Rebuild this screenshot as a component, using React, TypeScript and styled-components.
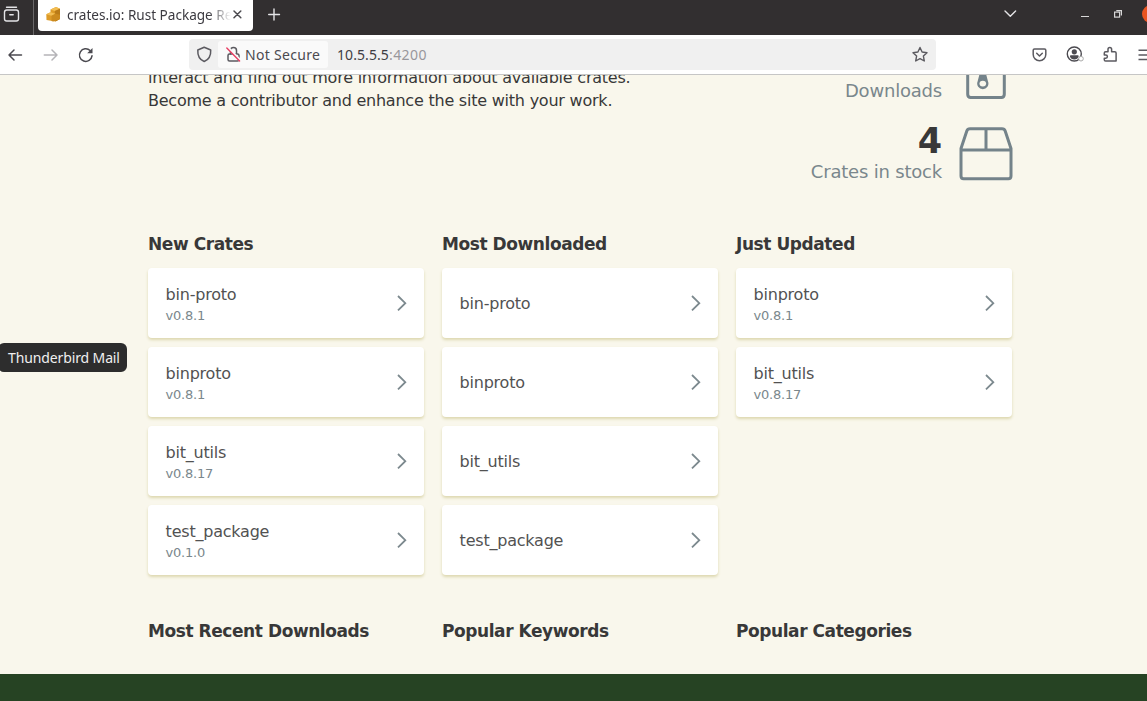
import React from "react";
import styled, { createGlobalStyle } from "styled-components";

const GlobalStyle = createGlobalStyle`
  *, *::before, *::after { box-sizing: border-box; }
  body { margin: 0; overflow: hidden; }
  h2, p { margin: 0; }
  svg { display: block; flex: none; }
`;

const Window = styled.div`
  position: relative;
  display: flex;
  flex-direction: column;
  width: 1147px;
  height: 701px;
  overflow: hidden;
  background: #f9f7ec;
  font-family: "DejaVu Sans", sans-serif;
  color: #383838;
`;

const TabBar = styled.div`
  display: flex;
  flex: none;
  height: 35px;
  background: #322f30;
  color: #fbfbfe;
  font-family: "Noto Sans", "Open Sans", sans-serif;
`;

const FirefoxView = styled.div`
  width: 34px;
  height: 35px;
  padding: 6px 0 0 3px;
  border-right: 1px solid #6a6869;
`;

const Tab = styled.div`
  display: flex;
  align-items: center;
  width: 215px;
  height: 34px;
  margin: -3px 0 0 4px;
  padding: 0 10px 0 7px;
  border-radius: 4px;
  background: #fff;
  color: #3c3b41;
`;

const TabTitle = styled.span`
  width: 166px;
  margin-left: 5px;
  padding-top: 1px;
  overflow: hidden;
  white-space: nowrap;
  font-size: 13.6px;
  line-height: 20px;
  letter-spacing: -0.02px;
  mask-image: linear-gradient(to left, transparent 2px, #000 24px);
`;

const NewTab = styled.div`
  padding: 8px 0 0 15px;
`;

const WindowControls = styled.div`
  display: flex;
  align-items: center;
  height: 28px;
  margin-left: auto;
`;

const Minimize = styled.div`
  width: 8px;
  height: 1.5px;
  margin: 5px 25px 0 64px;
  background: #d8d8d8;
`;

const CloseButton = styled.div`
  width: 18px;
  height: 18px;
  margin: 0 -13px 0 20px;
  border-radius: 50%;
  background: #e95420;
`;

const NavBar = styled.div`
  display: flex;
  flex: none;
  align-items: center;
  height: 40px;
  padding-left: 7px;
  border-bottom: 1px solid #c6c6c6;
  background: #fff;
  color: #55545a;
  font-family: "Noto Sans", "Open Sans", sans-serif;
`;

const NavButtons = styled.div`
  display: flex;
  flex: none;
  align-items: center;
  gap: 19px;
  width: 182px;
`;

const AddressBar = styled.div`
  display: flex;
  flex: none;
  align-items: center;
  width: 747px;
  height: 31px;
  padding: 0 8px 0 7px;
  border-radius: 4px;
  background: #f0f0f0;
  font-size: 14px;
  white-space: nowrap;
`;

const Security = styled.div`
  display: flex;
  align-items: center;
  gap: 3px;
  width: 110px;
  height: 27px;
  margin-left: 6px;
  padding-left: 7px;
  border-radius: 3px;
  background: #fafafa;
  color: #4b4a50;
  letter-spacing: 0.3px;
`;

const Url = styled.span`
  margin: 0 auto 0 9px;
  font-size: 14px;
  letter-spacing: 0.08px;
  color: #3e3d43;
`;

const Port = styled.span`
  color: #98979c;
  letter-spacing: 0.45px;
`;

const Extensions = styled.div`
  display: flex;
  flex: none;
  align-items: center;
  gap: 18px;
  margin-left: 95px;
`;

const Page = styled.div`
  flex: 1;
  display: flex;
  flex-direction: column;
  min-height: 0;
  overflow: hidden;
`;

const Intro = styled.section`
  display: flex;
  justify-content: space-between;
  width: 865px;
  height: 120px;
  margin-left: 148px;
`;

const Blurb = styled.p`
  margin-top: -9px;
  font-size: 16px;
  line-height: 23px;
  letter-spacing: -0.225px;
  white-space: nowrap;
`;

const Stats = styled.div`
  display: flex;
  flex-direction: column;
`;

const Stat = styled.div<{ $height: number }>`
  display: flex;
  justify-content: flex-end;
  align-items: flex-end;
  height: ${(p) => p.$height}px;
  text-align: right;
`;

const StatText = styled.div<{ $drop: number }>`
  margin: 0 17px ${(p) => -p.$drop}px 0;
  color: #7a878c;
  font-size: 18px;
  line-height: 22px;
  letter-spacing: -0.2px;
`;

const StatValue = styled.div`
  margin-bottom: 2px;
  color: #383838;
  font-size: 35px;
  font-weight: 700;
  line-height: 36px;
`;

const ArchiveSlot = styled.div`
  width: 54px;
  margin-bottom: 2px;
  padding-left: 7px;
`;

const Lists = styled.section<{ $top: number }>`
  display: grid;
  grid-template-columns: repeat(3, 276px);
  align-items: start;
  gap: 18px;
  margin: ${(p) => p.$top}px 0 0 148px;
`;

const Column = styled.div`
  display: flex;
  flex-direction: column;
  gap: 9px;
`;

const Heading = styled.h2`
  margin-bottom: 5px;
  font-size: 17px;
  font-weight: 700;
  line-height: 20px;
  letter-spacing: -0.43px;
  white-space: nowrap;
`;

const Card = styled.div`
  display: flex;
  align-items: center;
  justify-content: space-between;
  height: 70px;
  padding: 0 15px 0 17.6px;
  border-radius: 4px;
  background: #fff;
  box-shadow: 0 2px 3px #ddd8b0;
  color: #525252;
  font-size: 16px;
  line-height: 20px;
  letter-spacing: -0.22px;
`;

const CrateLabel = styled.div<{ $offset: number }>`
  padding-top: ${(p) => p.$offset}px;
`;

const Version = styled.div`
  margin-top: 2px;
  color: #7a878c;
  font-size: 13px;
  line-height: 18px;
  letter-spacing: -0.22px;
`;

const Footer = styled.footer`
  flex: none;
  height: 27px;
  margin-top: auto;
  background: #264323;
`;

const Tooltip = styled.div`
  position: absolute;
  left: -2px;
  top: 343px;
  width: 129px;
  height: 29px;
  padding-left: 10px;
  border-radius: 6px;
  background: #2d2d2d;
  color: #f0f0f0;
  font-family: "Noto Sans", "Open Sans", sans-serif;
  font-size: 14px;
  line-height: 29px;
  letter-spacing: -0.12px;
  white-space: nowrap;
`;

const Chevron = () => (
  <svg width="14" height="18" viewBox="0 0 14 18" fill="none" stroke="#7c898e" strokeWidth="1.8">
    <path d="M3 2l7.300 7.200L3 16.400" />
  </svg>
);

const CrateIcon = () => (
  <svg width="54" height="54" viewBox="0 0 54 54" fill="none" stroke="#74838a" strokeWidth="3" strokeLinejoin="round">
    <path d="M2 21.500L7.800 4Q8.600 1.700 11 1.700H43Q45.400 1.700 46.200 4L52 21.500V49Q52 51.700 49.300 51.700H4.700Q2 51.700 2 49zM2 23H52M27 2V23" />
  </svg>
);

const ArchiveIcon = () => (
  <svg width="40" height="54" viewBox="0 0 40 54" fill="none" stroke="#74838a" strokeWidth="3">
    <path d="M1.700 2H38.300V49.300Q38.300 52.500 35.300 52.500H4.700Q1.700 52.500 1.700 49.300z" />
    <path d="M14.300 26h5l2.700 10.500a5.600 5.600 0 1 1-10.400 0z" fill="#74838a" stroke="none" />
    <ellipse cx="16.800" cy="38.600" rx="3.300" ry="2.900" fill="#f9f7ec" stroke="none" />
  </svg>
);

type Crate = { name: string; version?: string };
const columns: { title: string; crates: Crate[] }[] = [
  {
    title: "New Crates",
    crates: [
      { name: "bin-proto", version: "v0.8.1" },
      { name: "binproto", version: "v0.8.1" },
      { name: "bit_utils", version: "v0.8.17" },
      { name: "test_package", version: "v0.1.0" },
    ],
  },
  {
    title: "Most Downloaded",
    crates: [{ name: "bin-proto" }, { name: "binproto" }, { name: "bit_utils" }, { name: "test_package" }],
  },
  {
    title: "Just Updated",
    crates: [
      { name: "binproto", version: "v0.8.1" },
      { name: "bit_utils", version: "v0.8.17" },
    ],
  },
];

const BrowserTabs = () => (
  <TabBar>
    <FirefoxView>
      <svg width="18" height="17" viewBox="0 0 18 17" fill="none" stroke="#e4e4e6" strokeWidth="1.4" strokeLinecap="round">
        <path d="M3.500 1.200h10" />
        <rect x="1.500" y="4" width="14" height="11" rx="2.200" />
        <path d="M6.800 8.800h3.400" />
      </svg>
    </FirefoxView>
    <Tab>
      <svg width="17" height="17" viewBox="0 0 17 17">
        <path d="M5.500 3.500L11 1l4 1.700V13l-4.500 2.500L1.500 14 1.300 8.200l4.200-2z" fill="#dd9b28" />
        <path d="M5.500 3.500L11 1l4 1.700-5.200 2.200z" fill="#f2bd52" />
        <path d="M9.800 5L15 2.700V13l-4.500 2.500L9.800 9z" fill="#b97b18" />
        <path d="M1.300 8.200l4.200-2 5 1.600-4 2z" fill="#f2bd52" />
        <path d="M6.500 9.800l4-2 4.500 1V13l-7 2.600-1.500-.6z" fill="#cb8a1e" />
      </svg>
      <TabTitle>crates.io: Rust Package Registry</TabTitle>
      <svg width="9" height="9" viewBox="0 0 9 9" stroke="#4c4b50" strokeWidth="1.5" strokeLinecap="round">
        <path d="M1 1l6.800 6.800M7.800 1L1 7.800" />
      </svg>
    </Tab>
    <NewTab>
      <svg width="13" height="13" viewBox="0 0 13 13" stroke="#e4e4e6" strokeWidth="1.400" strokeLinecap="round">
        <path d="M6 1v11M.7 6.500h10.800" />
      </svg>
    </NewTab>
    <WindowControls>
      <svg width="14" height="8" viewBox="0 0 14 8" fill="none" stroke="#e4e4e6" strokeWidth="1.400" strokeLinecap="round" strokeLinejoin="round">
        <path d="M2 1l5.300 5.300L12.600 1" />
      </svg>
      <Minimize />
      <svg width="8" height="8" viewBox="0 0 8 8" fill="none" stroke="#d8d8d8" strokeWidth="1.200">
        <rect x=".6" y="2.100" width="5" height="5" />
        <path d="M2.300.6h5.100v5" />
      </svg>
      <CloseButton />
    </WindowControls>
  </TabBar>
);

const BrowserNav = () => (
  <NavBar>
    <NavButtons>
      <svg width="16" height="16" viewBox="0 0 16 16" fill="none" stroke="#4b4a50" strokeWidth="1.500" strokeLinecap="round" strokeLinejoin="round">
        <path d="M14.500 8H2M7 3L2 8l5 5" />
      </svg>
      <svg width="16" height="16" viewBox="0 0 16 16" fill="none" stroke="#b5b4b8" strokeWidth="1.500" strokeLinecap="round" strokeLinejoin="round">
        <path d="M2.300 8H15M10 3l5 5-5 5" />
      </svg>
      <svg width="17" height="16" viewBox="0 0 17 16" fill="none" stroke="#4b4a50" strokeWidth="1.500" strokeLinecap="round">
        <path d="M15 8.800a6.300 6.300 0 1 1-1.900-5.300" />
        <path d="M15.500 1v5.300h-5.300z" fill="#4b4a50" stroke="none" />
      </svg>
    </NavButtons>
    <AddressBar>
      <svg width="16" height="17" viewBox="0 0 16 17" fill="none" stroke="#5b5a60" strokeWidth="1.500" strokeLinejoin="round">
        <path d="M8.200 1.200L14.700 4c.3 5.500-1.700 9.600-6.500 11.500C3.400 13.600 1.500 9.500 1.800 4z" />
      </svg>
      <Security>
        <svg width="17" height="17" viewBox="0 0 17 17" fill="none" stroke="#5b5a60" strokeWidth="1.500" strokeLinecap="round">
          <path d="M5.500 8V4.500a3 3 0 0 1 6 0V8" />
          <rect x="3" y="8" width="11" height="7" rx="1.500" />
          <path d="M2.800 1.400L15.300 14.400" stroke="#fafafa" strokeWidth="2.600" />
          <path d="M1.800 2l12.800 13" stroke="#e83e63" strokeWidth="1.400" />
        </svg>
        Not Secure
      </Security>
      <Url>
        10.5.5.5<Port>:4200</Port>
      </Url>
      <svg width="17" height="17" viewBox="0 0 17 17" fill="none" stroke="#5b5a60" strokeWidth="1.400" strokeLinejoin="round">
        <path d="M9 1.500l2.100 4.500 4.900.7-3.600 3.400.9 4.900L9 12.600 4.700 15l.9-4.900L2 6.700 6.900 6z" />
      </svg>
    </AddressBar>
    <Extensions>
      <svg width="16" height="16" viewBox="0 0 16 16" fill="none" stroke="#5b5a60" strokeWidth="1.500" strokeLinecap="round" strokeLinejoin="round">
        <path d="M3.500 2h10q1.300 0 1.300 1.300V7.500a6.300 6.200 0 0 1-12.600 0V3.300Q2.200 2 3.500 2zM5.700 6.300l2.800 2.700 2.800-2.700" />
      </svg>
      <svg width="19" height="17" viewBox="0 0 19 17" fill="none">
        <circle cx="9.300" cy="8" r="7" stroke="#4b4a50" strokeWidth="1.400" />
        <circle cx="9.300" cy="5.800" r="2.600" fill="#4b4a50" />
        <path d="M4.900 10.200q0-.9 1-.9h6.800q1 0 1 .9-1 3.200-4.400 3.200t-4.400-3.200z" fill="#4b4a50" />
        <circle cx="16" cy="12.700" r="2.300" fill="#fff" stroke="#aaa" />
      </svg>
      <svg width="17" height="17" viewBox="0 0 17 17" fill="none" stroke="#5b5a60" strokeWidth="1.500" strokeLinejoin="round">
        <path d="M2.300 9V7q0-1.300 1.300-1.300H6V3.300a1.800 1.800 0 0 1 3.600 0v2.400h3.200q1.300 0 1.300 1.300v8H3.600q-1.300 0-1.300-1.300v-1.500h1.500a1.600 1.600 0 0 0 0-3.200z" />
      </svg>
      <svg width="16" height="16" viewBox="0 0 16 16" stroke="#5b5a60" strokeWidth="1.400">
        <path d="M1.500 3.300h14M1.500 8h14M1.500 12.500h14" />
      </svg>
    </Extensions>
  </NavBar>
);

export default function App() {
  return (
    <>
      <GlobalStyle />
      <Window>
        <BrowserTabs />
        <BrowserNav />
        <Page>
          <Intro>
            <Blurb>
              interact and find out more information about available crates.
              <br />
              Become a contributor and enhance the site with your work.
            </Blurb>
            <Stats>
              <Stat $height={26}>
                <StatText $drop={1}>Downloads</StatText>
                <ArchiveSlot>
                  <ArchiveIcon />
                </ArchiveSlot>
              </Stat>
              <Stat $height={80}>
                <StatText $drop={2}>
                  <StatValue>4</StatValue>
                  Crates in stock
                </StatText>
                <CrateIcon />
              </Stat>
            </Stats>
          </Intro>
          <Lists $top={39}>
            {columns.map((column) => (
              <Column key={column.title}>
                <Heading>{column.title}</Heading>
                {column.crates.map((crate) => (
                  <Card key={crate.name}>
                    <CrateLabel $offset={crate.version ? 4 : 2}>
                      {crate.name}
                      {crate.version && <Version>{crate.version}</Version>}
                    </CrateLabel>
                    <Chevron />
                  </Card>
                ))}
              </Column>
            ))}
          </Lists>
          <Lists $top={46}>
            <Heading>Most Recent Downloads</Heading>
            <Heading>Popular Keywords</Heading>
            <Heading>Popular Categories</Heading>
          </Lists>
          <Footer />
        </Page>
        <Tooltip>Thunderbird Mail</Tooltip>
      </Window>
    </>
  );
}
